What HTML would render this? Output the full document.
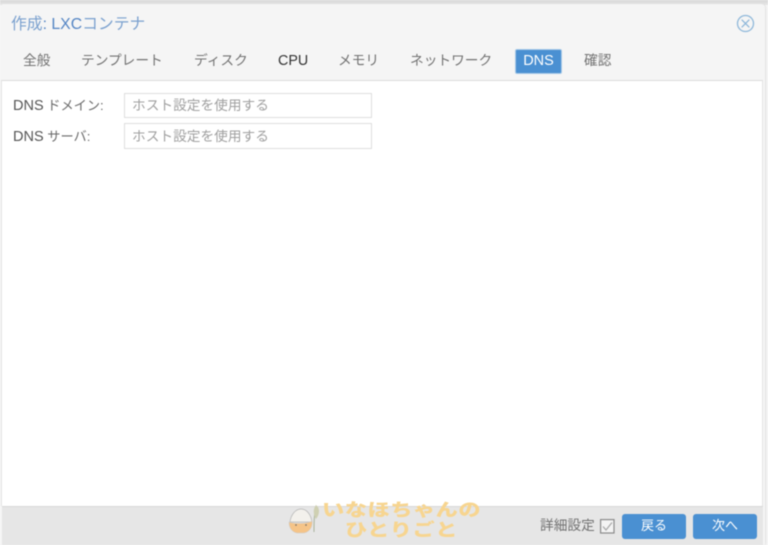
<!DOCTYPE html>
<html lang="ja"><head><meta charset="utf-8"><title>作成: LXCコンテナ</title>
<style>
html,body{margin:0;padding:0;width:768px;height:545px;overflow:hidden;background:#f8f8f8}
body{font-family:"Liberation Sans","Noto Sans CJK JP",sans-serif;position:relative}
#root{position:absolute;inset:0;filter:blur(.4px)}
.a{position:absolute;white-space:nowrap}
#shadow{left:0;top:0;width:768px;height:5px;background:linear-gradient(#d8d8d8,#e6e6e6)}
#win{left:0;top:4px;width:765px;height:541px;background:#f5f5f5;border-radius:4px 4px 0 0;box-shadow:1px 0 2px #ddd}
#body{left:1px;top:80px;width:762px;height:426px;background:#fff;border-top:1px solid #dcdcdc;border-left:1px solid #e4e4e4;border-right:1px solid #e4e4e4;box-sizing:border-box}
#foot{left:2px;top:506px;width:761px;height:39px;background:#e6e6e6;border-top:1px solid #d8d8d8;box-sizing:border-box}
.tab{top:52px;font-size:13.7px;line-height:18px;color:#727272}
.lb{font-size:13.2px;line-height:18px;color:#6a6a6a;left:13px}
.lb b{font-weight:400;font-size:14.5px;color:#555}
.in{left:124px;width:248px;height:26px;box-sizing:border-box;border:1px solid #dedede;background:#fff;color:#a0a0a0;font-size:13.7px;line-height:24px;padding-left:7px}
.btn{top:514px;height:25px;border-radius:3px;background:#4a90d2;color:#fff;font-size:13px;line-height:24px;text-align:center}
.wm{left:322px;font-size:17.5px;font-weight:900;line-height:21px;color:#f7d590;letter-spacing:.4px;transform:scaleX(1.27);transform-origin:0 50%}
</style></head><body><div id="root">
<div class="a" id="shadow"></div>
<div class="a" id="win"></div>
<div class="a" style="left:11px;top:14px;font-size:15.8px;line-height:20px;color:#5485c4;margin-top:.5px"><span style="color:#7ba1cf">作成</span>: LXC<span style="color:#7ba1cf">コンテナ</span></div>
<svg class="a" style="left:736px;top:14px" width="19" height="19" viewBox="0 0 19 19" fill="none" stroke="#8fb8da" stroke-width="1.3"><circle cx="9.5" cy="9.5" r="8"/><path d="M5.7 5.7L13.3 13.3M13.3 5.7L5.7 13.3"/></svg>
<div class="a tab" style="left:23px">全般</div>
<div class="a tab" style="left:81px">テンプレート</div>
<div class="a tab" style="left:194px">ディスク</div>
<div class="a tab" style="left:278px;color:#333;font-size:14.3px">CPU</div>
<div class="a tab" style="left:338px">メモリ</div>
<div class="a tab" style="left:410px">ネットワーク</div>
<div class="a" style="left:515px;top:49px;width:47px;height:25px;box-sizing:border-box;background:#4a90d2;border:1.5px solid #a6c9e8;border-radius:2px;color:#fff;font-size:14.5px;line-height:22px;text-align:center">DNS</div>
<div class="a tab" style="left:584px">確認</div>
<div class="a" id="body"></div>
<div class="a lb" style="top:97px"><b>DNS</b> ドメイン:</div>
<div class="a in" style="top:93px;height:25px;line-height:24px">ホスト設定を使用する</div>
<div class="a lb" style="top:128px"><b>DNS</b> サーバ:</div>
<div class="a in" style="top:123px;line-height:25px">ホスト設定を使用する</div>
<div class="a" id="foot"></div>
<svg class="a" style="left:287px;top:504px" width="34" height="32" viewBox="0 0 34 32"><path d="M3 18C4 10 9 5 14 5C20 5 24 11 25 18Z" fill="#f3f1ec" stroke="#b5b5b5" stroke-width=".7"/><path d="M2 18C6 20 21 20 25 17C26 24 21 29 16 29L10 29C5 28 2 24 2 18Z" fill="#f5c488" stroke="#ccc" stroke-width=".5"/><circle cx="9" cy="21" r=".8" fill="#666"/><circle cx="19" cy="21" r=".8" fill="#666"/><path d="M27 28C27 19 27 11 29 4" stroke="#a9b39a" stroke-width="1" fill="none"/><path d="M29 1C33 4 33 10 29 15C26 10 26 5 29 1Z" fill="#cfd0b2"/></svg>
<div class="a wm" style="top:500px">いなほちゃんの</div>
<div class="a wm" style="top:520px;left:345px">ひとりごと</div>
<div class="a" style="left:540px;top:517px;font-size:13.7px;line-height:18px;color:#727272">詳細設定</div>
<svg class="a" style="left:600px;top:519px" width="15" height="15" viewBox="0 0 15 15" fill="#f4f4f4" stroke="#8a8a8a" stroke-width="1.2"><rect x=".6" y=".6" width="13.4" height="13.4"/><path d="M3 7.5L6 11L12 3.5" fill="none" stroke="#aaa" stroke-width="1.3"/></svg>
<div class="a btn" style="left:622px;width:64px">戻る</div>
<div class="a btn" style="left:693px;width:64px">次へ</div>
</div></body></html>
